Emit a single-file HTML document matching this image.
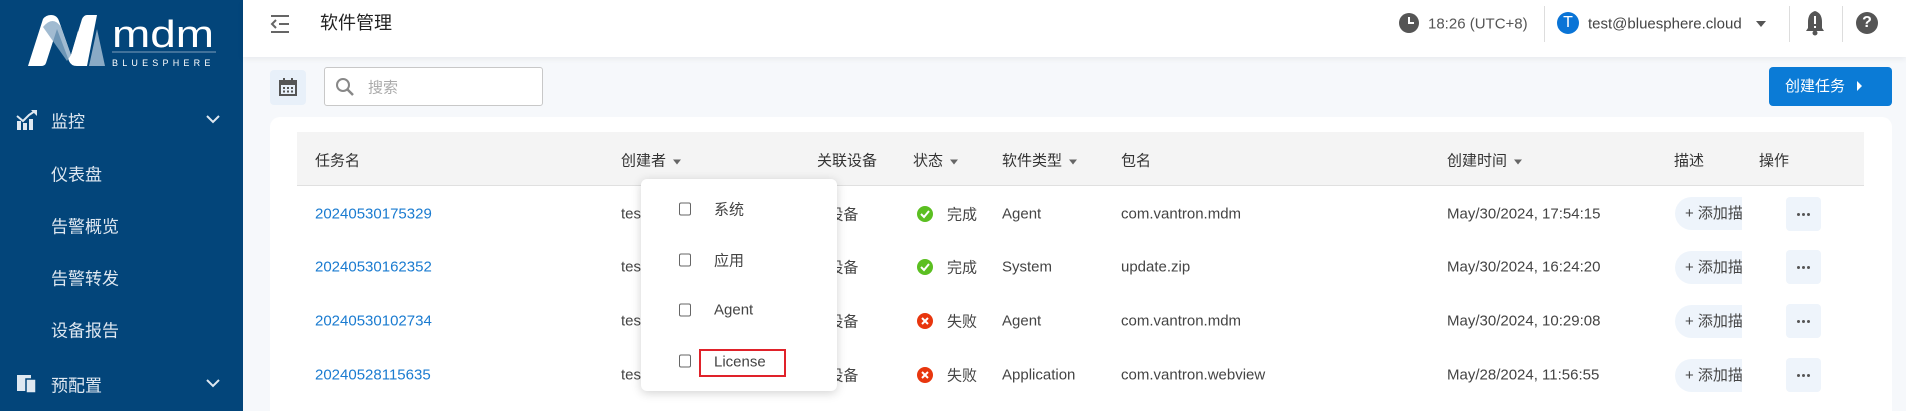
<!DOCTYPE html>
<html><head><meta charset="utf-8"><style>
*{box-sizing:border-box;margin:0;padding:0}
html,body{width:1906px;height:411px;overflow:hidden}
body{background:#f6f8fb;font-family:"Liberation Sans","Noto Sans CJK SC",sans-serif;color:#333;position:relative}
.abs{position:absolute}
.side{left:0;top:0;width:243px;height:411px;background:#03457a}
.side .it{position:absolute;left:51px;color:#dfe8f1;font-size:17px;transform:translateY(-50%)}
.hdr{left:243px;top:0;width:1663px;height:57px;background:#fff;box-shadow:0 2px 6px rgba(0,0,0,.06)}
.t{position:absolute;transform:translateY(-50%);white-space:nowrap}
.card{left:270px;top:117px;width:1622px;height:294px;background:#fff;border-radius:10px 10px 0 0}
.th{left:297px;top:132px;width:1567px;height:54px;background:#f4f4f4;border-bottom:1px solid #e0e0e0}
.h{font-size:15px;color:#333}
.c{font-size:15px;color:#444}
.link{color:#1a7bd0;font-size:15px}
.car{display:inline-block;width:0;height:0;border-left:4px solid transparent;border-right:4px solid transparent;border-top:5px solid #666;margin-left:7px;vertical-align:middle}
.add{position:absolute;left:1675px;width:67px;height:33px;background:#eef4fb;border-radius:17px 0 0 17px;overflow:hidden;font-size:15px;color:#444;line-height:33px;padding-left:10px;white-space:nowrap}
.more{position:absolute;left:1786px;width:35px;height:34px;background:#eef4fb;border-radius:4px}
.more i{position:absolute;top:16px;width:3px;height:3px;background:#555;border-radius:50%}
.dd{left:641px;top:179px;width:196px;height:212px;background:#fff;border-radius:6px;box-shadow:0 2px 10px rgba(0,0,0,.18)}
.cb{position:absolute;left:679px;width:12px;height:13px;border:1.5px solid #666;border-radius:2px;transform:translateY(-50%)}
.ok{position:absolute;left:917px;width:16px;height:16px;border-radius:50%;transform:translateY(-50%)}
</style></head><body>
<div class="abs side">
 <svg class="abs" style="left:27px;top:15px" width="190" height="52" viewBox="0 0 190 52">
  <path d="M1 51 L16 4 Q19 0 24 0 Q30 0 32 6 L44 40 L51 16 L58 40 L50 51 Q44 51 42 46 L30 14 L19 48 Q18 51 14 51 Z" fill="#fff"/>
  <path d="M44 40 L55 4 Q57 0 60 0 L70 0 L60 51 L50 51 Z" fill="#fff"/>
  <path d="M62 51 L70 14 L78 51 Z" fill="#8aaac5"/>
  <path d="M16 12 Q26 0 34 12 L44 40 L40 46 Z" fill="#8aaac5" opacity=".8"/>
  <text x="85" y="32" fill="#fff" font-family="Liberation Sans" font-size="38" textLength="102" lengthAdjust="spacingAndGlyphs">mdm</text>
  <line x1="85" y1="37" x2="189" y2="37" stroke="#7f9fbc" stroke-width="1"/>
  <text x="85" y="51" fill="#fff" font-family="Liberation Sans" font-size="9" letter-spacing="4.2">BLUESPHERE</text>
 </svg>
 <svg class="abs" style="left:16px;top:110px" width="22" height="20" viewBox="0 0 22 20"><rect x="1" y="11" width="4" height="9" fill="#dfe8f1"/><rect x="7" y="13" width="4" height="7" fill="#dfe8f1"/><rect x="13" y="9" width="4" height="11" fill="#dfe8f1"/><path d="M1 6 L7 11 L13 5 L19 1" stroke="#dfe8f1" stroke-width="2" fill="none"/><path d="M15 0 H21 V6 Z" fill="#dfe8f1"/></svg>
 <div class="it" style="top:120px">监控</div>
 <svg class="abs" style="left:206px;top:114px" width="14" height="10"><path d="M1 2 L7 8 L13 2" stroke="#dfe8f1" stroke-width="2" fill="none"/></svg>
 <div class="it" style="top:173px">仪表盘</div>
 <div class="it" style="top:225px">告警概览</div>
 <div class="it" style="top:277px">告警转发</div>
 <div class="it" style="top:329px">设备报告</div>
 <svg class="abs" style="left:16px;top:374px" width="22" height="20" viewBox="0 0 22 20"><rect x="1" y="1" width="14" height="16" fill="#dfe8f1"/><rect x="10" y="5" width="10" height="14" fill="#dfe8f1" stroke="#03457a" stroke-width="1.5"/></svg>
 <div class="it" style="top:384px">预配置</div>
 <svg class="abs" style="left:206px;top:378px" width="14" height="10"><path d="M1 2 L7 8 L13 2" stroke="#dfe8f1" stroke-width="2" fill="none"/></svg>
</div>
<div class="abs hdr"></div>
<svg class="abs" style="left:270px;top:14px" width="20" height="20" viewBox="0 0 20 20"><path d="M1 2 H19 M9 10 H19 M1 18 H19" stroke="#666" stroke-width="2"/><path d="M6 6 L2 10 L6 14" stroke="#666" stroke-width="2" fill="none"/></svg>
<div class="t" style="left:320px;top:22px;font-size:18px;color:#222">软件管理</div>
<svg class="abs" style="left:1399px;top:13px" width="20" height="20"><circle cx="10" cy="10" r="10" fill="#555"/><path d="M10 4 V10 H15" stroke="#fff" stroke-width="2" fill="none"/></svg>
<div class="t" style="left:1428px;top:24px;font-size:15px;color:#555">18:26 (UTC+8)</div>
<div class="abs" style="left:1544px;top:6px;width:1px;height:36px;background:#ddd"></div>
<div class="abs" style="left:1557px;top:12px;width:22px;height:22px;border-radius:50%;background:#0a74d6;color:#fff;font-size:16px;text-align:center;line-height:22px">T</div>
<div class="t" style="left:1588px;top:24px;font-size:15px;color:#444">test@bluesphere.cloud</div>
<div class="abs" style="left:1756px;top:21px;border-left:5px solid transparent;border-right:5px solid transparent;border-top:6px solid #555"></div>
<div class="abs" style="left:1789px;top:6px;width:1px;height:36px;background:#ddd"></div>
<svg class="abs" style="left:1805px;top:10px" width="20" height="26" viewBox="0 0 20 26"><path d="M10 1 Q3 3 3 12 V18 L1 21 H19 L17 18 V12 Q17 3 10 1Z" fill="#555"/><rect x="9" y="6" width="2" height="8" fill="#fff"/><rect x="9" y="16" width="2" height="2" fill="#fff"/><circle cx="10" cy="23" r="2.5" fill="#555"/></svg>
<div class="abs" style="left:1842px;top:6px;width:1px;height:36px;background:#ddd"></div>
<div class="abs" style="left:1856px;top:12px;width:22px;height:22px;border-radius:50%;background:#555;color:#fff;font-size:16px;font-weight:bold;text-align:center;line-height:22px">?</div>

<div class="abs" style="left:270px;top:70px;width:36px;height:35px;background:#e8f0f9;border-radius:4px"></div>
<svg class="abs" style="left:279px;top:78px" width="18" height="18" viewBox="0 0 18 18"><rect x="1" y="3" width="16" height="14" fill="none" stroke="#555" stroke-width="2"/><rect x="1" y="3" width="16" height="4" fill="#555"/><path d="M5 0 V4 M13 0 V4" stroke="#555" stroke-width="2"/><path d="M4 10 H6 M8 10 H10 M12 10 H14 M4 13.5 H6 M8 13.5 H10 M12 13.5 H14" stroke="#555" stroke-width="2"/></svg>
<div class="abs" style="left:324px;top:67px;width:219px;height:39px;border:1px solid #c8c8c8;border-radius:3px;background:#fff"></div>
<svg class="abs" style="left:335px;top:77px" width="20" height="20"><circle cx="8" cy="8" r="6" stroke="#888" stroke-width="2" fill="none"/><path d="M12.5 12.5 L18 18" stroke="#888" stroke-width="2.5"/></svg>
<div class="t" style="left:368px;top:87px;font-size:15px;color:#aaa">搜索</div>
<div class="abs" style="left:1769px;top:67px;width:123px;height:39px;background:#0b7bd6;border-radius:4px;color:#fff;font-size:15px;line-height:39px;padding-left:16px">创建任务 <span style="display:inline-block;border-top:5px solid transparent;border-bottom:5px solid transparent;border-left:5px solid #fff;margin-left:8px"></span></div>

<div class="abs card"></div>
<div class="abs th"></div>
<div class="t h" style="left:315px;top:160px">任务名</div>
<div class="t h" style="left:621px;top:160px">创建者<span class="car"></span></div>
<div class="t h" style="left:817px;top:160px">关联设备</div>
<div class="t h" style="left:913px;top:160px">状态<span class="car"></span></div>
<div class="t h" style="left:1002px;top:160px">软件类型<span class="car"></span></div>
<div class="t h" style="left:1121px;top:160px">包名</div>
<div class="t h" style="left:1447px;top:160px">创建时间<span class="car"></span></div>
<div class="t h" style="left:1674px;top:160px">描述</div>
<div class="t h" style="left:1759px;top:160px">操作</div>

<div class="t link" style="left:315px;top:214px">20240530175329</div>
<div class="t c" style="left:621px;top:214px">test</div>
<div class="t c" style="left:820px;top:214px">1设备</div>
<div class="ok" style="top:214px;background:#5bbf21"></div><svg class="abs" style="left:917px;top:206px" width="16" height="16"><path d="M4 8 L7 11 L12 5" stroke="#fff" stroke-width="2" fill="none"/></svg>
<div class="t c" style="left:947px;top:214px">完成</div>
<div class="t c" style="left:1002px;top:214px">Agent</div>
<div class="t c" style="left:1121px;top:214px">com.vantron.mdm</div>
<div class="t c" style="left:1447px;top:214px">May/30/2024, 17:54:15</div>
<div class="add" style="top:197px">+ 添加描述</div><div class="more" style="top:197px"><i style="left:11px"></i><i style="left:16px"></i><i style="left:21px"></i></div>

<div class="t link" style="left:315px;top:267px">20240530162352</div>
<div class="t c" style="left:621px;top:267px">test</div>
<div class="t c" style="left:820px;top:267px">1设备</div>
<div class="ok" style="top:267px;background:#5bbf21"></div><svg class="abs" style="left:917px;top:259px" width="16" height="16"><path d="M4 8 L7 11 L12 5" stroke="#fff" stroke-width="2" fill="none"/></svg>
<div class="t c" style="left:947px;top:267px">完成</div>
<div class="t c" style="left:1002px;top:267px">System</div>
<div class="t c" style="left:1121px;top:267px">update.zip</div>
<div class="t c" style="left:1447px;top:267px">May/30/2024, 16:24:20</div>
<div class="add" style="top:251px">+ 添加描述</div><div class="more" style="top:250px"><i style="left:11px"></i><i style="left:16px"></i><i style="left:21px"></i></div>

<div class="t link" style="left:315px;top:321px">20240530102734</div>
<div class="t c" style="left:621px;top:321px">test</div>
<div class="t c" style="left:820px;top:321px">1设备</div>
<div class="ok" style="top:321px;background:#e8360e"></div><svg class="abs" style="left:917px;top:313px" width="16" height="16"><path d="M5 5 L11 11 M11 5 L5 11" stroke="#fff" stroke-width="2"/></svg>
<div class="t c" style="left:947px;top:321px">失败</div>
<div class="t c" style="left:1002px;top:321px">Agent</div>
<div class="t c" style="left:1121px;top:321px">com.vantron.mdm</div>
<div class="t c" style="left:1447px;top:321px">May/30/2024, 10:29:08</div>
<div class="add" style="top:305px">+ 添加描述</div><div class="more" style="top:304px"><i style="left:11px"></i><i style="left:16px"></i><i style="left:21px"></i></div>

<div class="t link" style="left:315px;top:375px">20240528115635</div>
<div class="t c" style="left:621px;top:375px">test</div>
<div class="t c" style="left:820px;top:375px">1设备</div>
<div class="ok" style="top:375px;background:#e8360e"></div><svg class="abs" style="left:917px;top:367px" width="16" height="16"><path d="M5 5 L11 11 M11 5 L5 11" stroke="#fff" stroke-width="2"/></svg>
<div class="t c" style="left:947px;top:375px">失败</div>
<div class="t c" style="left:1002px;top:375px">Application</div>
<div class="t c" style="left:1121px;top:375px">com.vantron.webview</div>
<div class="t c" style="left:1447px;top:375px">May/28/2024, 11:56:55</div>
<div class="add" style="top:359px">+ 添加描述</div><div class="more" style="top:358px"><i style="left:11px"></i><i style="left:16px"></i><i style="left:21px"></i></div>

<div class="abs dd"></div>
<div class="cb" style="top:209px"></div><div class="t c" style="left:714px;top:209px">系统</div>
<div class="cb" style="top:260px"></div><div class="t c" style="left:714px;top:260px">应用</div>
<div class="cb" style="top:310px"></div><div class="t c" style="left:714px;top:310px">Agent</div>
<div class="cb" style="top:361px"></div><div class="t c" style="left:714px;top:362px">License</div>
<div class="abs" style="left:699px;top:349px;width:87px;height:28px;border:2px solid #e0222a"></div>
</body></html>
